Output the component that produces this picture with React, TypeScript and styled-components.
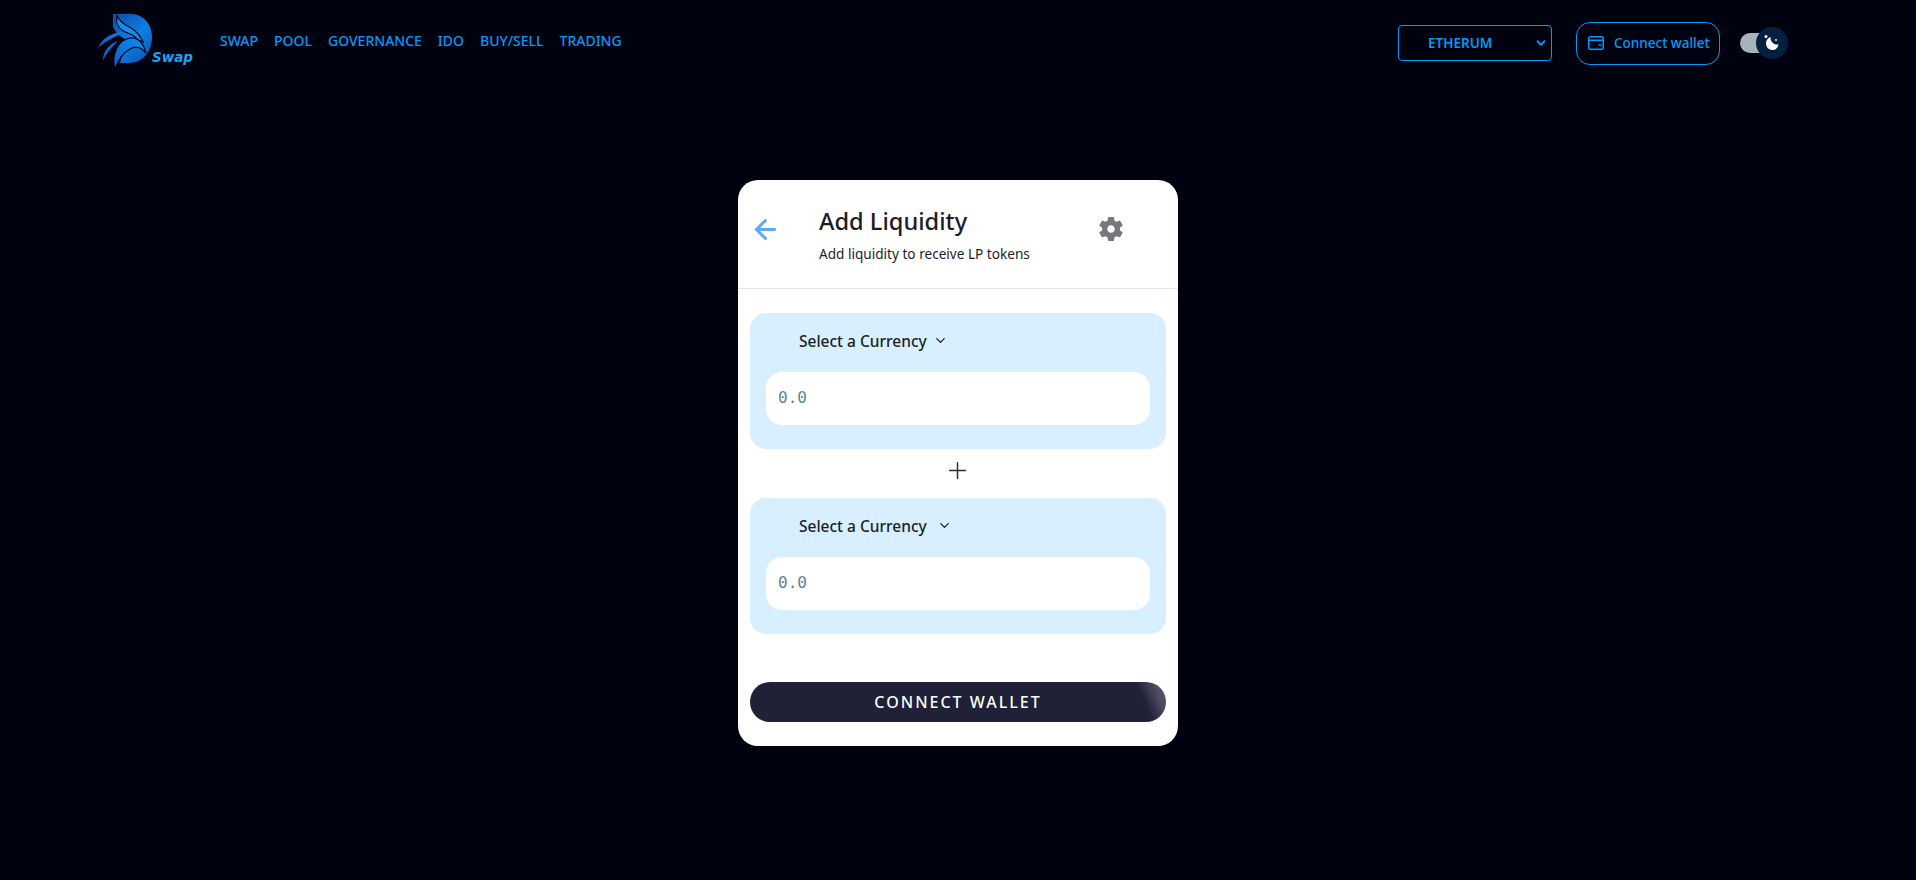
import styled, { createGlobalStyle } from "styled-components";
import { ArrowLeft, ChevronDown, Plus } from "lucide-react";

const GlobalStyle = createGlobalStyle`
    html, body {
        margin: 0;
        padding: 0;
        background: #01020f;
    }
    * {
        box-sizing: border-box;
    }
`;

const NAV_ITEMS = ["SWAP", "POOL", "GOVERNANCE", "IDO", "BUY/SELL", "TRADING"];

function Logo() {
    return (
        <LogoWrap>
            <svg width="60" height="58" viewBox="0 0 60 58" fill="none" xmlns="http://www.w3.org/2000/svg">
                <defs>
                    <linearGradient id="logoD" x1="15" y1="0" x2="58" y2="50" gradientUnits="userSpaceOnUse">
                        <stop offset="0" stopColor="#0a4aa8" />
                        <stop offset="0.5" stopColor="#0d7fe2" />
                        <stop offset="1" stopColor="#0a4fb4" />
                    </linearGradient>
                    <linearGradient id="logoWing" x1="0" y1="50" x2="45" y2="20" gradientUnits="userSpaceOnUse">
                        <stop offset="0" stopColor="#0a58c4" />
                        <stop offset="1" stopColor="#1090f2" />
                    </linearGradient>
                </defs>
                <path d="M15 2H33C46 2 54 13 54 25C54 39 45 51 31 51H22C24 42 29 36 35 33C28 27 20 25 15 15Z" fill="url(#logoD)" />
                <path d="M19 4C17 12 22 18 30 21C35 23 38 25 40 28L45 30C42 23 38 19 33 16C27 13 22 10 19 4Z" fill="#1090f2" stroke="#01020f" strokeWidth="1.2" />
                <path d="M17 57C13 42 20 28 32 26C39 25 45 30 48 41C43 35 37 34 32 37C25 41 20 48 17 57Z" fill="url(#logoWing)" stroke="#01020f" strokeWidth="1.2" />
                <path d="M0 36C4 26 15 20 26 20C17 25 7 29 0 36Z" fill="url(#logoWing)" />
                <path d="M5 49C5 39 11 32 20 29C14 35 8 41 5 49Z" fill="url(#logoWing)" />
            </svg>
            <LogoText>Swap</LogoText>
        </LogoWrap>
    );
}

function Gear() {
    return (
        <svg width="30" height="30" viewBox="0 0 24 24" fill="#77777c" xmlns="http://www.w3.org/2000/svg">
            <path d="M19.14 12.94c.04-.3.06-.61.06-.94 0-.32-.02-.64-.07-.94l2.03-1.58c.18-.14.23-.41.12-.61l-1.92-3.32c-.12-.22-.37-.29-.59-.22l-2.39.96c-.5-.38-1.03-.7-1.62-.94l-.36-2.54c-.04-.24-.24-.41-.48-.41h-3.84c-.24 0-.43.17-.47.41l-.36 2.54c-.59.24-1.13.57-1.62.94l-2.39-.96c-.22-.08-.47 0-.59.22L2.74 8.87c-.12.21-.08.47.12.61l2.03 1.58c-.05.3-.09.63-.09.94s.02.64.07.94l-2.03 1.58c-.18.14-.23.41-.12.61l1.92 3.32c.12.22.37.29.59.22l2.39-.96c.5.38 1.03.7 1.62.94l.36 2.54c.05.24.24.41.48.41h3.84c.24 0 .44-.17.47-.41l.36-2.54c.59-.24 1.13-.56 1.62-.94l2.39.96c.22.08.47 0 .59-.22l1.92-3.32c.12-.22.07-.47-.12-.61l-2.01-1.58zM12 15c-1.65 0-3-1.35-3-3s1.35-3 3-3 3 1.35 3 3-1.35 3-3 3z" />
        </svg>
    );
}

function WalletIcon() {
    return (
        <svg width="18" height="16" viewBox="0 0 18 16" fill="none" stroke="currentColor" strokeWidth="1.5" xmlns="http://www.w3.org/2000/svg">
            <rect x="1.75" y="1.75" width="14.5" height="12.5" rx="2" />
            <path d="M1.75 5.25H16.25" />
            <path d="M12 10H14" strokeLinecap="round" />
        </svg>
    );
}

function CurrencyPanel({ gap }: { gap: number }) {
    return (
        <Panel>
            <CurrencySelect $gap={gap}>
                <span>Select a Currency</span>
                <ChevronDown size={15} strokeWidth={2} />
            </CurrencySelect>
            <AmountInput placeholder="0.0" />
        </Panel>
    );
}

export default function App() {
    return (
        <Page>
            <GlobalStyle />
            <Header>
                <HeaderLeft>
                    <Logo />
                    <Nav>
                        {NAV_ITEMS.map((item) => (
                            <NavLink key={item}>{item}</NavLink>
                        ))}
                    </Nav>
                </HeaderLeft>
                <HeaderRight>
                    <ChainSelect>
                        <span>ETHERUM</span>
                        <ChainCaret>
                            <ChevronDown size={14} strokeWidth={3.2} />
                        </ChainCaret>
                    </ChainSelect>
                    <WalletButton>
                        <WalletIcon />
                        <span>Connect wallet</span>
                    </WalletButton>
                    <Toggle>
                        <Knob>
                            <svg width="22" height="22" viewBox="0 0 22 22" fill="#ffffff" xmlns="http://www.w3.org/2000/svg">
                                <path d="M9.5 5C9.5 9.5 12 13 17.5 12.5C17 16 14.5 18 11.5 18C8 18 5 15.2 5 11.5C5 8.5 6.8 6 9.5 5Z" />
                                <circle cx="5" cy="4.5" r="1.5" />
                                <circle cx="15" cy="8" r="0.9" />
                            </svg>
                        </Knob>
                    </Toggle>
                </HeaderRight>
            </Header>
            <Main>
                <Card>
                    <CardHeader>
                        <BackIcon>
                            <ArrowLeft size={31} strokeWidth={2.3} />
                        </BackIcon>
                        <Heading>
                            <Title>Add Liquidity</Title>
                            <SubTitle>Add liquidity to receive LP tokens</SubTitle>
                        </Heading>
                        <Settings>
                            <Gear />
                        </Settings>
                    </CardHeader>
                    <CardBody>
                        <CurrencyPanel gap={6} />
                        <PlusRow>
                            <Plus size={27} strokeWidth={1.3} />
                        </PlusRow>
                        <CurrencyPanel gap={10} />
                        <ConnectButton>CONNECT WALLET</ConnectButton>
                    </CardBody>
                </Card>
            </Main>
        </Page>
    );
}

const Page = styled.div`
    width: 100%;
    height: 880px;
    overflow: hidden;
    background: #01020f;
    font-family: "Noto Sans", "Open Sans", sans-serif;
`;

const Header = styled.header`
    display: flex;
    justify-content: space-between;
    height: 80px;
    padding: 0 142px 0 98px;
`;

const HeaderLeft = styled.div`
    display: flex;
    align-items: flex-start;
`;

const LogoWrap = styled.div`
    position: relative;
    width: 122px;
    height: 58px;
    margin-top: 12px;
`;

const LogoText = styled.span`
    position: absolute;
    left: 54px;
    top: 37px;
    font-family: "DejaVu Sans", sans-serif;
    font-size: 13.5px;
    font-weight: 700;
    font-style: italic;
    color: #1ba3f2;
`;

const Nav = styled.nav`
    display: flex;
    gap: 16px;
    padding-top: 31px;
`;

const NavLink = styled.a`
    font-size: 14px;
    line-height: 20px;
    font-weight: 500;
    color: #009bf7;
`;

const HeaderRight = styled.div`
    display: flex;
    align-items: center;
    height: 86px;
`;

const ChainSelect = styled.div`
    position: relative;
    display: flex;
    align-items: center;
    width: 154px;
    height: 36px;
    padding-left: 29px;
    border: 1px solid #009bf7;
    border-radius: 4px;
    font-size: 13.5px;
    font-weight: 600;
    color: #009bf7;
`;

const ChainCaret = styled.span`
    position: absolute;
    right: 3px;
    top: 10px;
    display: flex;
`;

const WalletButton = styled.div`
    display: flex;
    align-items: center;
    gap: 9px;
    width: 144px;
    height: 43px;
    margin-left: 24px;
    padding-left: 10px;
    border: 1px solid #009bf7;
    border-radius: 14px;
    font-size: 13.5px;
    font-weight: 500;
    color: #009bf7;
`;

const Toggle = styled.div`
    position: relative;
    width: 34px;
    height: 20px;
    margin-left: 20px;
    border-radius: 10px;
    background: #a9b1bb;
`;

const Knob = styled.div`
    position: absolute;
    left: 16px;
    top: -6px;
    display: flex;
    align-items: center;
    justify-content: center;
    width: 32px;
    height: 32px;
    border-radius: 50%;
    background: #03203f;
`;

const Main = styled.main`
    display: flex;
    justify-content: center;
    padding-top: 100px;
`;

const Card = styled.section`
    width: 440px;
    height: 566px;
    border-radius: 20px;
    background: #ffffff;
`;

const CardHeader = styled.div`
    display: flex;
    height: 109px;
    padding-left: 12px;
    border-bottom: 1px solid #dfe6ea;
`;

const BackIcon = styled.div`
    display: flex;
    width: 69px;
    padding-top: 34px;
    color: #5fa8f5;
`;

const Heading = styled.div`
    width: 277px;
    padding-top: 25px;
    color: #1d1d26;
`;

const Title = styled.h1`
    margin: 0;
    font-size: 23.6px;
    line-height: 32px;
    font-weight: 500;
`;

const SubTitle = styled.p`
    margin: 7px 0 0;
    font-size: 13.6px;
    line-height: 20px;
    font-weight: 400;
`;

const Settings = styled.div`
    display: flex;
    padding-top: 34px;
`;

const CardBody = styled.div`
    display: flex;
    flex-direction: column;
    padding: 24px 12px 0;
`;

const Panel = styled.div`
    height: 136px;
    padding: 0 16px;
    border-radius: 16px;
    background: #d8efff;
`;

const CurrencySelect = styled.div<{ $gap: number }>`
    display: flex;
    align-items: center;
    gap: ${(p) => p.$gap}px;
    height: 55px;
    margin-bottom: 4px;
    padding-left: 33px;
    font-size: 15.5px;
    font-weight: 500;
    color: #1d1d26;
`;

const AmountInput = styled.input`
    display: block;
    width: 100%;
    height: 53px;
    padding: 0 12px 2px;
    border: none;
    outline: none;
    border-radius: 16px;
    background: #ffffff;
    font-family: "DejaVu Sans Mono", monospace;
    font-size: 16px;

    &::placeholder {
        color: #62809c;
    }
`;

const PlusRow = styled.div`
    display: flex;
    align-items: center;
    justify-content: center;
    height: 49px;
    padding: 0 1px 6px 0;
    color: #2a2a33;
`;

const ConnectButton = styled.button`
    height: 40px;
    margin-top: 48px;
    border: none;
    border-radius: 20px;
    background: linear-gradient(67deg, #202036 93%, #4e4c63 97%, #5a586e 100%);
    font-family: "Noto Sans", "Open Sans", sans-serif;
    font-size: 16px;
    font-weight: 500;
    letter-spacing: 2px;
    color: #ffffff;
`;
